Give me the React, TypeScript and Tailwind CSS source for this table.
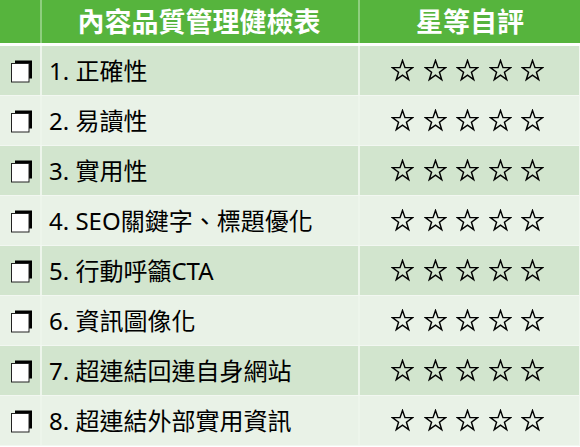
import React from "react";

const items = [
  "1. 正確性",
  "2. 易讀性",
  "3. 實用性",
  "4. SEO關鍵字、標題優化",
  "5. 行動呼籲CTA",
  "6. 資訊圖像化",
  "7. 超連結回連自身網站",
  "8. 超連結外部實用資訊",
];

function CheckBox() {
  return (
    <svg width="22" height="23" viewBox="0 0 22 23">
      <rect x="4" y="0.5" width="17" height="18" fill="#000" />
      <rect x="0.5" y="3.5" width="17.5" height="18.5" fill="#fff" stroke="#222" strokeWidth="1" />
    </svg>
  );
}

function Star() {
  return (
    <svg width="23" height="23" viewBox="0 0 24 24">
      <polygon
        points="12,1.5 14.6,9 22.5,9 16.1,13.8 18.5,21.5 12,16.8 5.5,21.5 7.9,13.8 1.5,9 9.4,9"
        fill="none"
        stroke="#000"
        strokeWidth="1.5"
        strokeLinejoin="miter"
      />
    </svg>
  );
}

export default function App() {
  return (
    <div
      className="w-[580px] h-[447px] bg-white overflow-hidden"
      style={{ fontFamily: '"Noto Sans", "Noto Sans CJK TC", sans-serif' }}
    >
      {/* header */}
      <div className="flex h-[43px] bg-[#56b43d] text-white font-bold text-[27px] leading-none">
        <div className="w-[42px] border-r-2 border-[#8fce7f]" />
        <div className="w-[318px] border-r-2 border-[#8fce7f] flex items-center justify-center pr-[2px]">
          內容品質管理健檢表
        </div>
        <div className="flex-1 flex items-center justify-center">星等自評</div>
      </div>
      <div className="h-[3px]" />

      {items.map((text, i) => (
        <div
          key={text}
          className={
            "flex h-[50px] border-b border-[#f2f7f1] text-[24px] text-black " +
            (i % 2 === 0 ? "bg-[#d2e5ce]" : "bg-[#e9f2e7]")
          }
        >
          <div className="w-[42px] border-r-2 border-[#edf5eb] flex items-center pl-[11px] pt-[1px]">
            <CheckBox />
          </div>
          <div className="w-[318px] border-r-2 border-[#edf5eb] flex items-center pl-[7px] leading-none">
            {text}
          </div>
          <div className="flex-1 flex items-center pl-[31px] gap-[9.5px] border-r border-[#f2f7f1]">
            {[0, 1, 2, 3, 4].map((s) => (
              <Star key={s} />
            ))}
          </div>
        </div>
      ))}
    </div>
  );
}
